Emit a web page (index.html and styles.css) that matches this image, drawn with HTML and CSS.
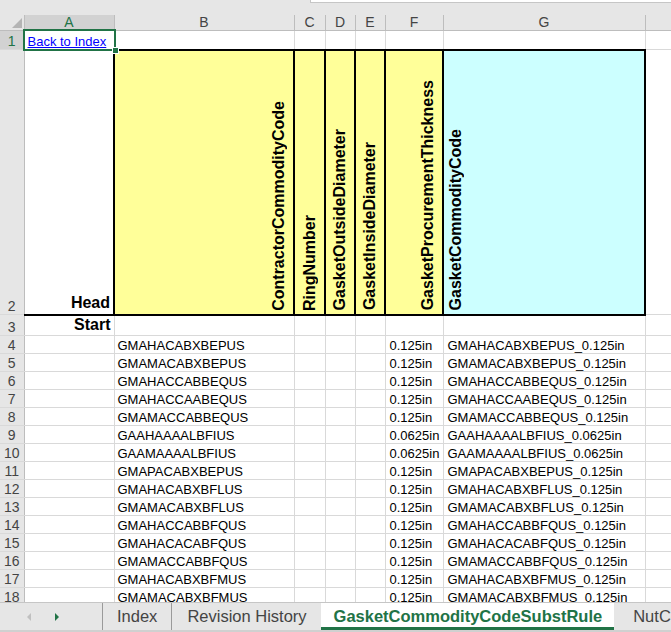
FILE: index.html
```html
<!DOCTYPE html>
<html lang="en">
<head>
    <meta charset="UTF-8">
    <meta name="viewport" content="width=device-width, initial-scale=1.0">
    <title>GasketCommodityCodeSubstRule</title>
    <link rel="stylesheet" href="styles.css">
</head>
<body>
    <div id="app">
        <!-- bottom of the formula bar -->
        <div id="formula-strip"><div class="formula-box"></div></div>

        <div id="sheet-view">
            <table class="sheet">
                <colgroup>
                    <col class="w-rn"><col class="w-a"><col class="w-b"><col class="w-c"><col class="w-d">
                    <col class="w-e"><col class="w-f"><col class="w-g"><col class="w-h">
                </colgroup>
                <tr class="col-heads">
                    <th class="corner"><span class="corner-tri"></span></th>
                    <th class="picked">A</th><th>B</th><th>C</th><th>D</th><th>E</th><th>F</th><th>G</th><th></th>
                </tr>
                <tr class="row-link">
                    <th class="rn picked">1</th>
                    <td class="active-cell"><a href="#">Back to Index</a><span class="fill-handle"></span></td>
                    <td></td><td></td><td></td><td></td><td></td><td></td><td></td>
                </tr>
                <tr class="row-head">
                    <th class="rn">2</th>
                    <td class="label">Head</td>
                    <td class="hd yellow at-right"><span class="vtext">ContractorCommodityCode</span></td>
                    <td class="hd yellow at-mid"><span class="vtext">RingNumber</span></td>
                    <td class="hd yellow at-mid"><span class="vtext">GasketOutsideDiameter</span></td>
                    <td class="hd yellow at-mid"><span class="vtext">GasketInsideDiameter</span></td>
                    <td class="hd yellow at-right"><span class="vtext">GasketProcurementThickness</span></td>
                    <td class="hd cyan at-left"><span class="vtext">GasketCommodityCode</span></td>
                    <td></td>
                </tr>
                <tr class="row-start">
                    <th class="rn">3</th>
                    <td class="label">Start</td>
                    <td></td><td></td><td></td><td></td><td></td><td></td><td></td>
                </tr>
                <tr class="data"><th class="rn">4</th><td></td><td>GMAHACABXBEPUS</td><td></td><td></td><td></td><td>0.125in</td><td>GMAHACABXBEPUS_0.125in</td><td></td></tr>
                <tr class="data"><th class="rn">5</th><td></td><td>GMAMACABXBEPUS</td><td></td><td></td><td></td><td>0.125in</td><td>GMAMACABXBEPUS_0.125in</td><td></td></tr>
                <tr class="data"><th class="rn">6</th><td></td><td>GMAHACCABBEQUS</td><td></td><td></td><td></td><td>0.125in</td><td>GMAHACCABBEQUS_0.125in</td><td></td></tr>
                <tr class="data"><th class="rn">7</th><td></td><td>GMAHACCAABEQUS</td><td></td><td></td><td></td><td>0.125in</td><td>GMAHACCAABEQUS_0.125in</td><td></td></tr>
                <tr class="data"><th class="rn">8</th><td></td><td>GMAMACCABBEQUS</td><td></td><td></td><td></td><td>0.125in</td><td>GMAMACCABBEQUS_0.125in</td><td></td></tr>
                <tr class="data"><th class="rn">9</th><td></td><td>GAAHAAAALBFIUS</td><td></td><td></td><td></td><td>0.0625in</td><td>GAAHAAAALBFIUS_0.0625in</td><td></td></tr>
                <tr class="data"><th class="rn">10</th><td></td><td>GAAMAAAALBFIUS</td><td></td><td></td><td></td><td>0.0625in</td><td>GAAMAAAALBFIUS_0.0625in</td><td></td></tr>
                <tr class="data"><th class="rn">11</th><td></td><td>GMAPACABXBEPUS</td><td></td><td></td><td></td><td>0.125in</td><td>GMAPACABXBEPUS_0.125in</td><td></td></tr>
                <tr class="data"><th class="rn">12</th><td></td><td>GMAHACABXBFLUS</td><td></td><td></td><td></td><td>0.125in</td><td>GMAHACABXBFLUS_0.125in</td><td></td></tr>
                <tr class="data"><th class="rn">13</th><td></td><td>GMAMACABXBFLUS</td><td></td><td></td><td></td><td>0.125in</td><td>GMAMACABXBFLUS_0.125in</td><td></td></tr>
                <tr class="data"><th class="rn">14</th><td></td><td>GMAHACCABBFQUS</td><td></td><td></td><td></td><td>0.125in</td><td>GMAHACCABBFQUS_0.125in</td><td></td></tr>
                <tr class="data"><th class="rn">15</th><td></td><td>GMAHACACABFQUS</td><td></td><td></td><td></td><td>0.125in</td><td>GMAHACACABFQUS_0.125in</td><td></td></tr>
                <tr class="data"><th class="rn">16</th><td></td><td>GMAMACCABBFQUS</td><td></td><td></td><td></td><td>0.125in</td><td>GMAMACCABBFQUS_0.125in</td><td></td></tr>
                <tr class="data"><th class="rn">17</th><td></td><td>GMAHACABXBFMUS</td><td></td><td></td><td></td><td>0.125in</td><td>GMAHACABXBFMUS_0.125in</td><td></td></tr>
                <tr class="data"><th class="rn">18</th><td></td><td>GMAMACABXBFMUS</td><td></td><td></td><td></td><td>0.125in</td><td>GMAMACABXBFMUS_0.125in</td><td></td></tr>
                <tr class="data"><th class="rn">19</th><td></td><td></td><td></td><td></td><td></td><td></td><td></td><td></td></tr>
            </table>
        </div>

        <div id="tab-bar">
            <div class="tab-nav">
                <span class="arrow arrow-left"></span>
                <span class="arrow arrow-right"></span>
            </div>
            <div class="tab">Index</div>
            <div class="tab">Revision History</div>
            <div class="tab tab-active">GasketCommodityCodeSubstRule</div>
            <div class="tab tab-next">NutCommodityCodeSubstRule</div>
        </div>
    </div>
</body>
</html>
```

FILE: styles.css
```css
:root{
    --chrome-gray: #e6e6e6;
    --chrome-line: #bdbdbd;
    --picked-gray: #d2d2d2;
    --grid-line: #d9d9d9;
    --excel-green: #217346;
    --head-yellow: #ffff99;
    --head-cyan: #ccffff;
}
html,body{
    margin: 0;
    padding: 0;
    overflow: hidden;
    background-color: #fff;
    font-family: "Liberation Sans", Arial, sans-serif;
}

#app{
    height: 632px;
    display: flex;
    flex-direction: column;
}

/* ==========
    Top strip
    ========== */
#formula-strip{
    height: 15px;
    flex: none;
    background-color: var(--chrome-gray);
    display: flex;
    justify-content: flex-end;
}
.formula-box{
    width: 360px;
    height: 2px;
    background-color: #fff;
    border: 1px solid #c6c6c6;
    border-top: none;
    border-right: none;
}

/* ==========
    Grid
    ========== */
#sheet-view{
    flex: 1;
    overflow: hidden;
}
.sheet{
    border-collapse: collapse;
    table-layout: fixed;
    width: 725px;
    font-size: 13px;
}
.w-rn{ width: 24px; }
.w-a{ width: 90px; }
.w-b{ width: 180px; }
.w-c{ width: 31px; }
.w-d{ width: 30px; }
.w-e{ width: 30px; }
.w-f{ width: 58px; }
.w-g{ width: 202px; }
.w-h{ width: 80px; }

.sheet td{
    border: 1px solid var(--grid-line);
    padding: 0 3px;
    line-height: 14px;
    vertical-align: bottom;
    white-space: nowrap;
    overflow: hidden;
    color: #000;
}

/* column letters */
.col-heads th{
    height: 15px;
    padding: 0;
    background-color: var(--chrome-gray);
    border-right: 1px solid var(--chrome-line);
    border-bottom: 1px solid var(--chrome-line);
    font-weight: normal;
    font-size: 14px;
    line-height: 15px;
    color: #444;
}
.col-heads th:last-child{
    border-right: none;
}
.col-heads .corner{
    position: relative;
}
.corner-tri{
    position: absolute;
    right: 2px;
    bottom: 2px;
    width: 0;
    height: 0;
    border-left: 10px solid transparent;
    border-bottom: 10px solid #b4b4b4;
}
.sheet th.picked{
    background-color: var(--picked-gray);
    color: var(--excel-green);
}

/* row numbers */
.sheet .rn{
    padding: 0;
    background-color: var(--chrome-gray);
    border-right: 1px solid var(--chrome-line);
    border-bottom: 1px solid var(--grid-line);
    font-weight: normal;
    font-size: 14px;
    line-height: 15px;
    color: #444;
    vertical-align: bottom;
}

.row-link{ height: 19px; }
.row-head{ height: 265px; }
.row-start{ height: 21px; }
.data{ height: 18px; }

/* selected A1 */
.active-cell{
    position: relative;
    overflow: visible !important;
}
.active-cell::after{
    content: "";
    position: absolute;
    left: -2px;
    top: -2px;
    right: -2px;
    bottom: -2px;
    border: 2px solid var(--excel-green);
    pointer-events: none;
}
.fill-handle{
    position: absolute;
    right: -5px;
    bottom: -5px;
    width: 5px;
    height: 5px;
    background-color: var(--excel-green);
    border: 1px solid #fff;
    z-index: 2;
}
.active-cell a{
    color: #0000ff;
    text-decoration: underline;
}

/* "Head" / "Start" */
.sheet td.label{
    text-align: right;
    font-weight: bold;
    font-size: 16px;
    line-height: 18px;
    padding-right: 3px;
}
.row-head td.label{
    border-bottom: 2px solid #000;
    padding-bottom: 2px;
}
.row-start td.label{
    padding-bottom: 1px;
}

/* rotated header cells */
.sheet td.hd{
    border: 2px solid #000;
    font-size: 0;
    line-height: 0;
    padding: 0 0 3px 0;
}
.yellow{ background-color: var(--head-yellow); }
.cyan{ background-color: var(--head-cyan); }
.at-right{ text-align: right; padding-right: 5px !important; }
.at-mid{ text-align: center; }
.at-left{ text-align: left; padding-left: 3px !important; }

.vtext{
    display: inline-block;
    vertical-align: bottom;
    writing-mode: vertical-rl;
    transform: rotate(180deg);
    font-size: 16px;
    line-height: 18px;
    font-weight: bold;
    white-space: nowrap;
}

.data td:nth-child(7),
.data td:nth-child(8){
    padding-left: 4px;
}

/* ==========
    Sheet tabs
    ========== */
#tab-bar{
    height: 30px;
    flex: none;
    box-sizing: border-box;
    background-color: var(--chrome-gray);
    border-top: 1px solid #c6c6c6;
    border-bottom: 2px solid #d0d0d0;
    display: flex;
    align-items: stretch;
    overflow: hidden;
    white-space: nowrap;
}
.tab-nav{
    width: 102px;
    flex: none;
    display: flex;
    align-items: center;
    padding-left: 27px;
    gap: 24px;
    box-sizing: border-box;
}
.arrow{
    width: 0;
    height: 0;
    border-top: 4px solid transparent;
    border-bottom: 4px solid transparent;
}
.arrow-left{ border-right: 4px solid #c0c0c0; }
.arrow-right{ border-left: 4px solid var(--excel-green); }

.tab{
    flex: none;
    font-size: 16.5px;
    line-height: 26px;
    color: #444;
    padding: 0 14px 0 14px;
    border-left: 1px solid #9a9a9a;
    background-clip: padding-box;
    position: relative;
}
.tab + .tab{
    padding-left: 15px;
}
.tab-active{
    background-color: #fff;
    color: var(--excel-green);
    font-weight: bold;
    border-left: none;
    border-bottom: 3px solid var(--excel-green);
    padding: 0 12px 0 13px !important;
}
.tab-next{
    border-left: none;
    padding-left: 19px !important;
}
```
